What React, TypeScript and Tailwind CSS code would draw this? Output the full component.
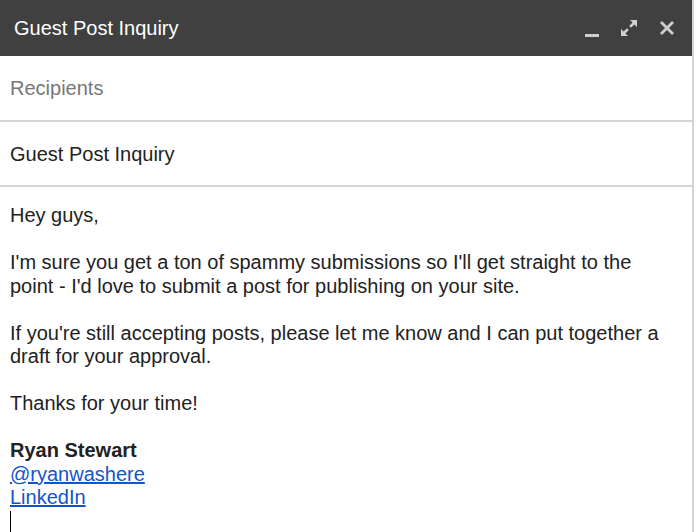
const ComposeHeader = () => (
  <div className="flex h-[56px] items-center justify-between bg-[#404040] pl-[14px] pr-[17px]">
    <span className="text-[20px] text-white">Guest Post Inquiry</span>
    <div className="flex items-center gap-[21px] text-[#cfcfcf]">
      <svg width="14" height="14" viewBox="0 0 14 14" className="mt-[6px]">
        <rect x="0" y="10" width="14" height="3" fill="currentColor" />
      </svg>
      <svg width="18" height="18" viewBox="0 0 18 18">
        <path d="M10 1h7v7l-2.6-2.6-3.4 3.4-1.8-1.8 3.4-3.4z" fill="currentColor" />
        <path d="M8 17H1v-7l2.6 2.6 3.4-3.4 1.8 1.8-3.4 3.4z" fill="currentColor" />
      </svg>
      <svg width="16" height="16" viewBox="0 0 16 16">
        <path d="M2 2l12 12M14 2L2 14" stroke="currentColor" strokeWidth="2.8" />
      </svg>
    </div>
  </div>
);

const App = () => {
  return (
    <div className="h-[532px] w-[700px] overflow-hidden bg-white font-['Liberation_Sans',Arial,sans-serif]">
      <div className="h-full w-[694px] border-r-2 border-[#d4d4d4]">
        <ComposeHeader />
        <div className="flex h-[66px] items-center border-b-2 border-[#d4d4d4] px-[10px] text-[20px] text-[#777777]">
          Recipients
        </div>
        <div className="flex h-[65px] items-center border-b-2 border-[#d4d4d4] px-[10px] text-[20px] text-[#222222]">
          Guest Post Inquiry
        </div>
        <div className="pl-[10px] pr-[20px] pt-[17px] text-[20px] leading-[23.5px] text-[#222222]">
          <p>Hey guys,</p>
          <br />
          <p>
            I'm sure you get a ton of spammy submissions so I'll get straight to the
            point - I'd love to submit a post for publishing on your site.
          </p>
          <br />
          <p>
            If you're still accepting posts, please let me know and I can put together a
            draft for your approval.
          </p>
          <br />
          <p>Thanks for your time!</p>
          <br />
          <p className="font-bold">Ryan Stewart</p>
          <p>
            <a href="#" className="text-[#1155cc] underline">@ryanwashere</a>
          </p>
          <p>
            <a href="#" className="text-[#1155cc] underline">LinkedIn</a>
          </p>
          <div className="mt-[1px] h-[24px] w-[1px] bg-black" />
        </div>
      </div>
    </div>
  );
};

export default App;
